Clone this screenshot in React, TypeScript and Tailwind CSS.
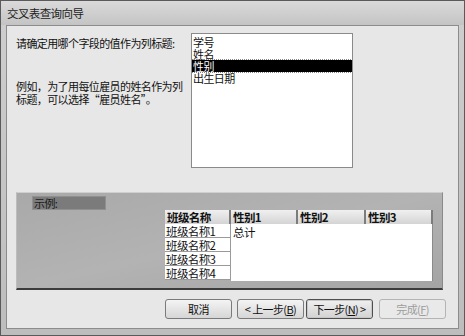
export default function App() {
  const fields = ["学号", "姓名", "性别", "出生日期"];
  const rows = ["班级名称1", "班级名称2", "班级名称3", "班级名称4"];

  return (
    <div className="w-[465px] h-[336px] flex flex-col bg-gradient-to-b from-[#cfcfcf] to-[#bdbdbd] border border-[#5a5a5a] font-['Noto_Sans_CJK_SC',sans-serif] text-[11px] leading-[12px] tracking-[-0.6px] text-[#111] whitespace-nowrap">
      {/* Title bar */}
      <div className="h-[24px] shrink-0 flex items-center pl-[6px] text-[11.5px] text-[#222] bg-gradient-to-b from-[#dadada] to-[#c4c4c4]">
        交叉表查询向导
      </div>

      {/* Client area */}
      <div className="flex-1 mx-[5px] mb-[6px] border border-[#8c8c8c] bg-[#e7e7e7] flex flex-col">
        {/* Top section */}
        <div className="flex pt-[7px] h-[142px] shrink-0">
          <div className="w-[184px] pl-[9px] pt-[4px] flex flex-col shrink-0">
            <p className="h-[12px]">请确定用哪个字段的值作为列标题:</p>
            <p className="mt-[31px] leading-[13px]">
              例如，为了用每位雇员的姓名作为列
              <br />
              标题，可以选择“雇员姓名”。
            </p>
          </div>
          <div className="w-[162px] h-[135px] bg-white border border-[#8a8a8a] pt-[2px] flex flex-col">
            {fields.map((f) => (
              <div
                key={f}
                className={
                  f === "性别"
                    ? "h-[12px] flex items-center pl-px bg-black text-white outline-1 outline-dotted outline-[#888]"
                    : "h-[12px] flex items-center pl-px"
                }
              >
                {f}
              </div>
            ))}
          </div>
        </div>

        {/* Example panel */}
        <div className="mt-[24px] ml-[9px] w-[427px] h-[98px] shrink-0 border-t border-t-[#cfcfcf] border-l border-l-[#bdbdbd] border-r border-r-[#8a8a8a] border-b-2 border-b-[#3c3c3c] bg-gradient-to-br from-[#a9a9a9] via-[#b3b3b3] to-[#a4a4a4] flex flex-col">
          <div className="ml-[15px] mt-[3px] w-[74px] h-[14px] bg-[#7b7b7b] border border-[#8f8f8f] flex items-center pl-px text-[#1a1a1a]">
            示例:
          </div>
          <div className="ml-[148px] flex text-[11.5px]">
            <div className="w-[66px] flex flex-col">
              <div className="h-[14px] bg-gradient-to-b from-[#f0f0f0] to-[#d4d4d4] border-r-2 border-r-[#7c7c7c] font-bold flex items-center pl-[2px]">
                班级名称
              </div>
              {rows.map((r) => (
                <div key={r} className="h-[14px] bg-white border-b border-r border-[#9a9a9a] flex items-center pl-px">
                  {r}
                </div>
              ))}
            </div>
            <div className="w-[202px] flex flex-col">
              <div className="h-[14px] flex">
                {["性别1", "性别2", "性别3"].map((h, i) => (
                  <div
                    key={h}
                    className={
                      (i === 1 ? "w-[68px] " : "w-[67px] ") +
                      "bg-gradient-to-b from-[#f0f0f0] to-[#d4d4d4] border-r-2 border-r-[#7c7c7c] font-bold flex items-center pl-[2px]"
                    }
                  >
                    {h}
                  </div>
                ))}
              </div>
              <div className="h-[57px] bg-white border-r border-[#8a8a8a] pl-[2px] pt-[2px]">总计</div>
            </div>
          </div>
        </div>

        {/* Buttons */}
        <div className="mt-[9px] flex gap-[4px] pl-[158px]">
          <button className="w-[67px] h-[20px] rounded-[3px] border border-[#7a7a7a] bg-gradient-to-b from-[#f4f4f4] to-[#d6d6d6]">
            取消
          </button>
          <button className="w-[67px] h-[20px] rounded-[3px] border border-[#7a7a7a] bg-gradient-to-b from-[#f4f4f4] to-[#d6d6d6] ml-px">
            &lt; 上一步(<span className="underline">B</span>)
          </button>
          <button className="w-[67px] h-[20px] rounded-[3px] border border-[#4e4e4e] outline outline-[#c8c8c8] -outline-offset-2 bg-gradient-to-b from-[#f0f0f0] to-[#d2d2d2] -ml-[2px]">
            下一步(<span className="underline">N</span>) &gt;
          </button>
          <button className="w-[67px] h-[20px] rounded-[3px] border border-[#b4b4b4] bg-[#e9e9e9] text-[#9c9c9c] ml-[2px]">
            完成(<span className="underline">F</span>)
          </button>
        </div>
      </div>
    </div>
  );
}
